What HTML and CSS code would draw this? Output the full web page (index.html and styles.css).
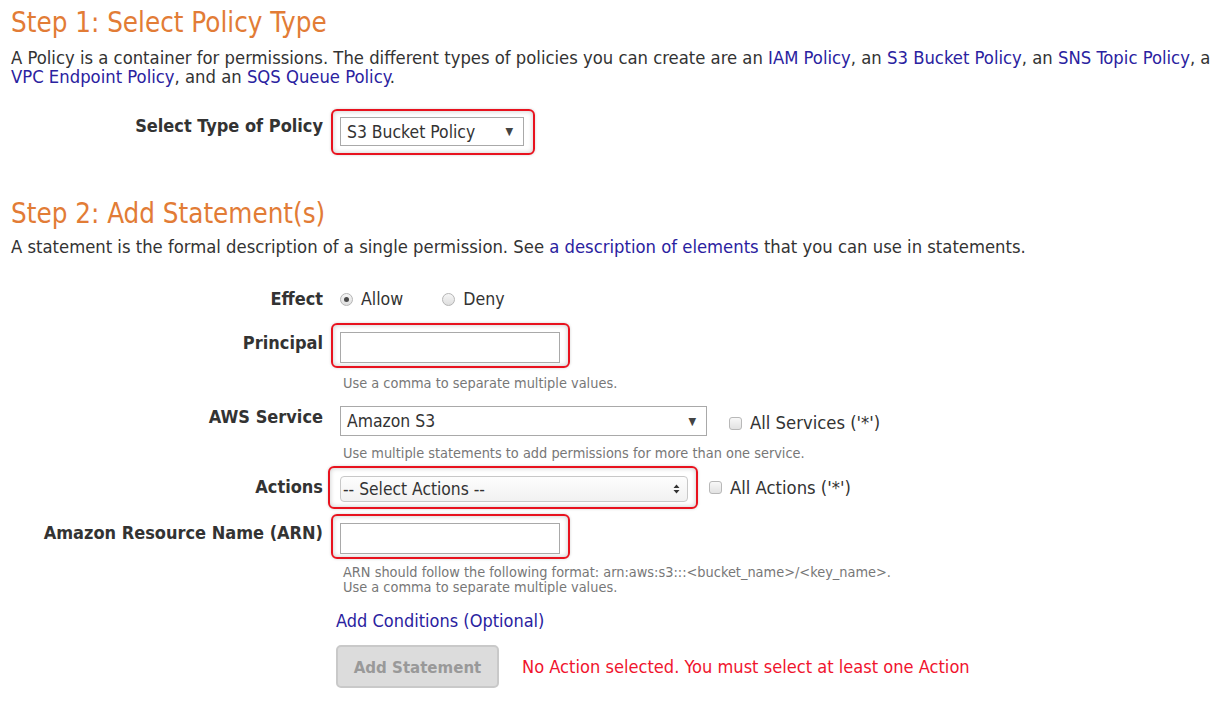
FILE: index.html
```html
<!DOCTYPE html>
<html>
<head>
<meta charset="utf-8">
<link rel="stylesheet" href="styles.css">
</head>
<body>
<div class="page">
  <h1 class="step step-1">Step 1: Select Policy Type</h1>
  <p class="intro intro-1">A Policy is a container for permissions. The different types of policies you can create are an <a href="#">IAM Policy</a>, an <a href="#">S3 Bucket Policy</a>, an <a href="#">SNS Topic Policy</a>, a <a href="#">VPC Endpoint Policy</a>, and an <a href="#">SQS Queue Policy</a>.</p>

  <div class="row row-type">
    <div class="label">Select Type of Policy</div>
    <div class="field">
      <div class="hilite hl-type">
        <div class="select sel-type"><span>S3 Bucket Policy</span><span class="caret">▼</span></div>
      </div>
    </div>
  </div>

  <h1 class="step step-2">Step 2: Add Statement(s)</h1>
  <p class="intro intro-2">A statement is the formal description of a single permission. See <a href="#">a description of elements</a> that you can use in statements.</p>

  <div class="row row-effect">
    <div class="label">Effect</div>
    <div class="field radios">
      <label class="opt"><span class="radio checked"></span>Allow</label>
      <label class="opt opt-deny"><span class="radio"></span>Deny</label>
    </div>
  </div>

  <div class="row row-principal">
    <div class="label">Principal</div>
    <div class="field">
      <div class="hilite hl-input">
        <div class="input"></div>
      </div>
      <div class="help help-principal">Use a comma to separate multiple values.</div>
    </div>
  </div>

  <div class="row row-service">
    <div class="label">AWS Service</div>
    <div class="field">
      <div class="inline">
        <div class="select sel-service"><span>Amazon S3</span><span class="caret">▼</span></div>
        <label class="opt opt-check"><span class="check"></span>All Services ('*')</label>
      </div>
      <div class="help help-service">Use multiple statements to add permissions for more than one service.</div>
    </div>
  </div>

  <div class="row row-actions">
    <div class="label">Actions</div>
    <div class="field">
      <div class="inline">
        <div class="hilite hl-actions">
          <div class="select sel-actions"><span>-- Select Actions --</span>
            <svg class="updown" width="7" height="10" viewBox="0 0 7 10"><path d="M3.5 0.5 L6.5 4 H0.5 Z M3.5 9.5 L6.5 6 H0.5 Z" fill="#333"/></svg>
          </div>
        </div>
        <label class="opt opt-check2"><span class="check"></span>All Actions ('*')</label>
      </div>
    </div>
  </div>

  <div class="row row-arn">
    <div class="label">Amazon Resource Name (ARN)</div>
    <div class="field">
      <div class="hilite hl-input">
        <div class="input"></div>
      </div>
      <div class="help help-arn">ARN should follow the following format: arn:aws:s3:::&lt;bucket_name&gt;/&lt;key_name&gt;.<br>Use a comma to separate multiple values.</div>
    </div>
  </div>

  <div class="actions-area">
    <a href="#" class="cond-link">Add Conditions (Optional)</a>
    <div class="submit-line">
      <button class="btn" disabled>Add Statement</button>
      <span class="error">No Action selected. You must select at least one Action</span>
    </div>
  </div>
</div>
</body>
</html>
```

FILE: styles.css
```css
html, body {
  margin: 0;
  padding: 0;
  background: #fff;
}
body {
  font-family: "DejaVu Sans Condensed", "DejaVu Sans", sans-serif;
  font-stretch: condensed;
  color: #333;
  font-size: 18px;
}
.page {
  padding: 7px 0 0 11px;
  width: 1211px;
}
a {
  color: #2a22a0;
  text-decoration: none;
}
.step {
  margin: 0;
  font-weight: normal;
  font-size: 27.5px;
  line-height: 30px;
  color: #e27c36;
}
.intro {
  margin: 11px 0 0 0;
  line-height: 19px;
  font-size: 18.3px;
}
.step-2 {
  margin-top: 43px;
}
.intro-2 {
  margin-top: 9px;
}
.row {
  display: flex;
  align-items: flex-start;
}
.label {
  width: 312px;
  flex: 0 0 312px;
  text-align: right;
  font-weight: bold;
  font-size: 18px;
  line-height: 22px;
  color: #333;
  margin-right: 8px;
}
.field {
  display: flex;
  flex-direction: column;
}
.hilite {
  border: 2px solid #e8121e;
  border-radius: 6px;
  box-shadow: inset 0 0 5px rgba(0,0,0,0.22), 0 0 3px rgba(0,0,0,0.18);
  padding: 6px 9px 7px 7px;
}
.select {
  box-sizing: border-box;
  display: flex;
  align-items: center;
  justify-content: space-between;
  border: 1px solid #a9a9a9;
  background: #fff;
  font-size: 17.4px;
  color: #333;
  padding: 0 10px 0 6px;
}
.caret {
  font-size: 11px;
  color: #444;
}
.row-type {
  margin-top: 23px;
}
.row-type .label {
  padding-top: 6px;
}
.sel-type {
  width: 184px;
  height: 29px;
}
.row-effect {
  margin-top: 32px;
}
.radios {
  flex-direction: row;
  align-items: center;
  height: 22px;
  padding-left: 9px;
  font-size: 17.6px;
}
.opt {
  display: flex;
  align-items: center;
  line-height: 22px;
}
.radio {
  box-sizing: border-box;
  width: 13px;
  height: 13px;
  border-radius: 50%;
  border: 1px solid #b5b5b5;
  background: linear-gradient(#f6f6f6, #dedede);
  margin-right: 8px;
  position: relative;
}
.radio.checked::after {
  content: "";
  position: absolute;
  left: 3px;
  top: 3px;
  width: 5px;
  height: 5px;
  border-radius: 50%;
  background: #4a4a4a;
}
.opt-deny {
  margin-left: 39px;
}
.row-principal {
  margin-top: 13px;
}
.row-principal .label {
  padding-top: 9px;
}
.hl-input {
  width: 220px;
  padding: 7px 8px 3px 7px;
}
.input {
  box-sizing: border-box;
  width: 220px;
  height: 31px;
  border: 1px solid #a9a9a9;
  background: #fff;
}
.help {
  font-size: 14.4px;
  line-height: 15px;
  color: #777;
  padding-left: 12px;
}
.help-principal {
  margin-top: 8px;
}
.row-service {
  margin-top: 15px;
}
.row-service .label {
  padding-top: 0;
}
.inline {
  display: flex;
  align-items: center;
}
.row-service .field {
  padding-left: 9px;
}
.sel-service {
  width: 367px;
  height: 30px;
}
.check {
  box-sizing: border-box;
  width: 13px;
  height: 13px;
  border-radius: 3px;
  border: 1px solid #b8b8b8;
  background: linear-gradient(#f8f8f8, #e2e2e2);
  margin-right: 8px;
}
.opt-check {
  margin-left: 22px;
  margin-top: 4px;
  font-size: 18.3px;
}
.help-service {
  margin-top: 10px;
  padding-left: 3px;
}
.row-actions {
  margin-top: 5px;
}
.row-actions .label {
  padding-top: 10px;
}
.row-actions .field {
  margin-left: -3px;
}
.hl-actions {
  padding: 8px 8px 5px 10px;
}
.sel-actions {
  width: 348px;
  height: 26px;
  border: 1px solid #c8c8c8;
  border-radius: 4px;
  background: linear-gradient(#fdfdfd, #f1f1f1);
  padding: 0 7px 0 2px;
  font-size: 17.3px;
}
.opt-check2 {
  margin-left: 11px;
  font-size: 18.3px;
}
.row-arn {
  margin-top: 5px;
}
.row-arn .label {
  padding-top: 8px;
}
.help-arn {
  margin-top: 6px;
}
.actions-area {
  margin-left: 325px;
  margin-top: 15px;
  display: flex;
  flex-direction: column;
  align-items: flex-start;
}
.cond-link {
  font-size: 18px;
  line-height: 22px;
}
.submit-line {
  display: flex;
  align-items: center;
  margin-top: 13px;
}
.btn {
  box-sizing: border-box;
  width: 163px;
  height: 43px;
  border: 2px solid #c9c9c9;
  border-radius: 5px;
  background: #dcdcdc;
  color: #999;
  font-family: inherit;
  font-stretch: condensed;
  font-weight: bold;
  font-size: 16.7px;
}
.error {
  margin-left: 23px;
  color: #f0142e;
  font-size: 18.1px;
}
```
